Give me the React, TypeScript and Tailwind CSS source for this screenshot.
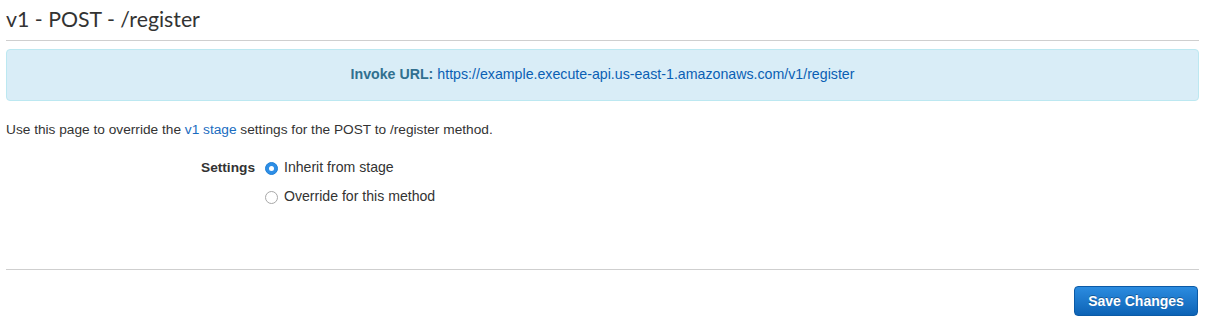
import React from "react";

export default function App() {
  return (
    <div className="w-[1205px] h-[324px] bg-white px-[6px] text-[13.7px] text-[#333] font-['Liberation_Sans',Arial,sans-serif] overflow-hidden">
      <div className="h-[40px] flex items-start pt-[5px]">
        <h1 className="text-[21.3px] leading-[28px] text-[#333] font-['Lato',sans-serif]">v1 - POST - /register</h1>
      </div>
      <div className="h-px bg-[#cfcfcf]" />
      <div className="mt-[8px] h-[52px] rounded-[4px] border border-[#bce8f1] bg-[#d9edf7] flex items-center justify-center text-[14.2px]">
        <span className="font-bold text-[#31708f]">Invoke URL:</span>
        <span className="ml-[4px] text-[#0a5fb4]">https://example.execute-api.us-east-1.amazonaws.com/v1/register</span>
      </div>
      <p className="mt-[21px] leading-[16px]">
        Use this page to override the <span className="text-[#1a6cbf]">v1 stage</span> settings for the POST to /register method.
      </p>
      <div className="mt-[20px] grid grid-cols-[249px_1fr] gap-x-[10px] gap-y-[9px]">
        <div className="h-[20px] flex items-center justify-end font-bold">Settings</div>
        <div className="h-[20px] flex items-center gap-[6px] text-[14.1px]">
          <span className="w-[13px] h-[13px] rounded-full bg-[#2d8ee6] border border-[#1f7fd6] flex items-center justify-center">
            <span className="w-[5px] h-[5px] rounded-full bg-white" />
          </span>
          <span>Inherit from stage</span>
        </div>
        <div />
        <div className="h-[20px] flex items-center gap-[6px] text-[14.1px]">
          <span className="w-[13px] h-[13px] rounded-full bg-white border border-[#a8a8a8]" />
          <span>Override for this method</span>
        </div>
      </div>
      <div className="mt-[62px] h-px bg-[#cfcfcf]" />
      <div className="mt-[16px] flex justify-end pr-[1px]">
        <button className="h-[30px] w-[124px] rounded-[4px] border border-[#0b5aa6] bg-gradient-to-b from-[#2b8ce0] to-[#0c63b6] text-white font-bold text-[14px] [text-shadow:0_-1px_0_rgba(0,0,0,0.3)]">
          Save Changes
        </button>
      </div>
    </div>
  );
}
